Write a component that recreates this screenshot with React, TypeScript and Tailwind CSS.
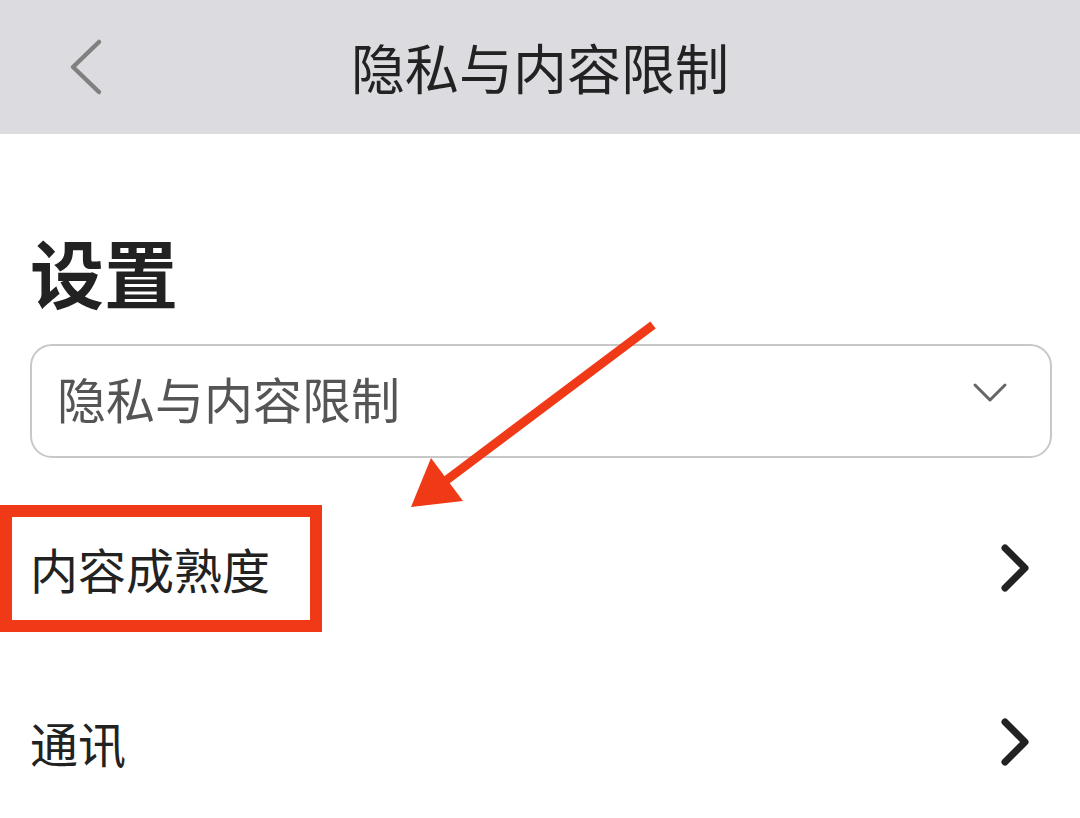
const font = { fontFamily: '"Noto Sans CJK SC", "Noto Sans", sans-serif' };

function Chevron({ points, className, w, h, stroke }: { points: string; className: string; w: number; h: number; stroke: number }) {
  return (
    <svg className={className} width={w} height={h} viewBox={`0 0 ${w} ${h}`} fill="none">
      <polyline points={points} stroke="currentColor" strokeWidth={stroke} strokeLinecap="round" strokeLinejoin="round" />
    </svg>
  );
}

function Row({ label }: { label: string }) {
  return (
    <div className="flex h-[174px] items-center justify-between pr-[20px]">
      <span className="text-[48px] leading-none text-[#222]">{label}</span>
      <Chevron className="text-[#222]" w={32} h={50} stroke={7} points="5,5 25,25 5,45" />
    </div>
  );
}

export default function App() {
  return (
    <div className="relative h-[818px] w-[1080px] overflow-hidden bg-white" style={font}>
      <header className="relative flex h-[134px] items-center justify-center bg-[#dcdce0]">
        <button className="absolute left-[68px] top-[38px] text-[#808080]">
          <Chevron className="" w={38} h={58} stroke={4.5} points="31,4 5,29 31,54" />
        </button>
        <h1 className="text-[54px] leading-none text-[#222]">隐私与内容限制</h1>
      </header>

      <main className="flex flex-col pl-[30px] pr-[28px]">
        <h2 className="mt-[100px] text-[74px] font-bold leading-none text-[#222]">设置</h2>

        <div className="mt-[36px] flex h-[114px] items-center justify-between rounded-[22px] border-2 border-[#c8c8c8] pl-[25px] pr-[42px]">
          <span className="-mt-[8px] text-[49px] leading-none text-[#555]">隐私与内容限制</span>
          <Chevron className="-mt-[14px] text-[#666]" w={36} h={24} stroke={3} points="3,3 18,18 33,3" />
        </div>

        <div className="mt-[23px]">
          <Row label="内容成熟度" />
          <Row label="通讯" />
        </div>
      </main>

      {/* annotation: red box */}
      <div className="absolute left-0 top-[505px] h-[127px] w-[322px] border-[12px] border-[#f03a17]" />

      {/* annotation: arrow */}
      <svg className="absolute left-0 top-0" width="1080" height="818" viewBox="0 0 1080 818">
        <line x1="653" y1="325" x2="440" y2="485" stroke="#f03a17" strokeWidth="9" />
        <polygon points="411,507 431,458 463,501" fill="#f03a17" />
      </svg>
    </div>
  );
}
